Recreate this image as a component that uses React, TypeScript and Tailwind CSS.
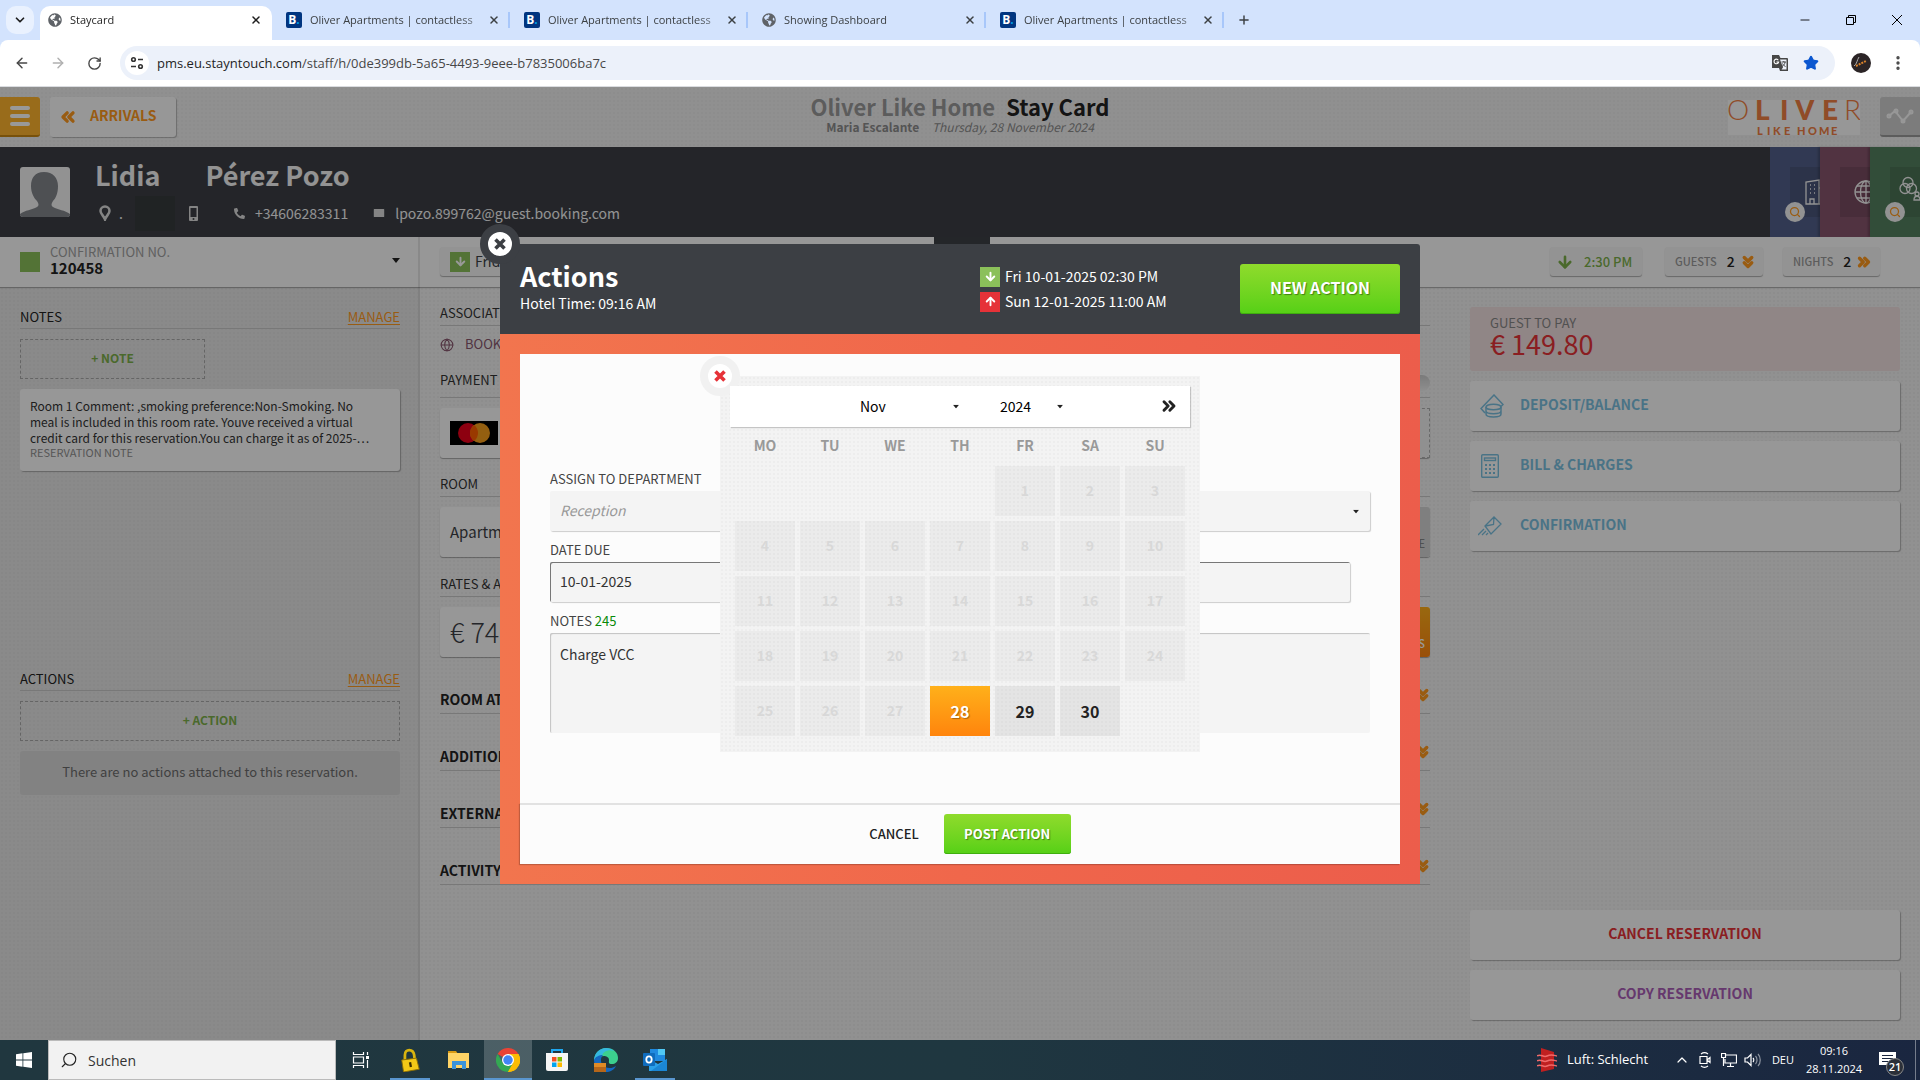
import type { ReactNode } from "react";
import {
  ArrowDown,
  ArrowLeft,
  ArrowRight,
  ArrowUp,
  ChevronDown,
  ChevronUp,
  ChevronsDown,
  ChevronsLeft,
  ChevronsRight,
  Globe,
  Mail,
  Minus,
  MoreVertical,
  Plus,
  RotateCw,
  Search,
  Star,
  X,
} from "lucide-react";
import { FaGlobeAmericas, FaPhone } from "react-icons/fa";

const texture =
  "bg-[radial-gradient(#00000006_1px,transparent_1px)] bg-size-[4px_4px]";

const tabs = [
  { title: "Staycard", icon: "globe", active: true },
  { title: "Oliver Apartments | contactless", icon: "booking" },
  { title: "Oliver Apartments | contactless", icon: "booking" },
  { title: "Showing Dashboard", icon: "globe" },
  { title: "Oliver Apartments | contactless", icon: "booking" },
];

const weekdays = ["MO", "TU", "WE", "TH", "FR", "SA", "SU"];
const today = 28;
const days: (number | null)[] = [
  null, null, null, null,
  ...Array.from({ length: 30 }, (_, i) => i + 1),
];

function Caret({ className = "" }: { className?: string }) {
  return (
    <svg viewBox="0 0 8 5" className={`w-2 h-[5px] shrink-0 ${className}`}>
      <path d="M0 0h8L4 5z" fill="#222" />
    </svg>
  );
}

function BoldCross() {
  return (
    <svg viewBox="0 0 12 12" className="size-3" fill="none" stroke="currentColor" strokeWidth="3.600">
      <path d="M1.500 1.500l9 9M10.500 1.500l-9 9" />
    </svg>
  );
}

function TabIcon({ kind }: { kind: string }) {
  if (kind === "globe") {
    return <FaGlobeAmericas className="size-[14px] shrink-0 text-[#5f6368]" />;
  }
  return (
    <span className="size-4 shrink-0 rounded-[2px] bg-[#003580] text-white text-[12px] leading-4 font-bold text-center">
      B<span className="text-[#009fe3]">.</span>
    </span>
  );
}

function BrowserTabs() {
  return (
    <div className="h-10 bg-[#d3e3fd] flex items-end text-[11px] text-[#3c4043]">
      <button aria-label="Search tabs" className="ml-[6px] mr-[6px] mb-[6px] size-7 rounded-[10px] bg-[#e9f1fe] grid place-items-center">
        <ChevronDown className="size-[14px] text-[#1f1f1f]" strokeWidth={3} />
      </button>
      {tabs.map((t, i) => (
        <div
          key={i}
          className={
            "relative h-[34px] pb-[6px] flex items-center gap-2 " +
            (t.active
              ? "w-[232px] px-2 bg-white rounded-t-[10px] text-[#1f1f1f]"
              : "w-[238px] pl-[14px] pr-2")
          }
        >
          <TabIcon kind={t.icon} />
          <span className="flex-1 whitespace-nowrap overflow-hidden [mask-image:linear-gradient(90deg,#000_88%,#0008)]">
            {t.title}
          </span>
          <button aria-label="Close tab" className="size-4 grid place-items-center">
            <X className="size-3" strokeWidth={3} />
          </button>
          {!t.active && <i className="absolute right-0 top-[6px] w-[2px] h-4 bg-[#a8c7fa]" />}
        </div>
      ))}
      <button aria-label="New tab" className="ml-2 h-7 mb-[6px] w-6 grid place-items-center">
        <Plus className="size-[14px]" strokeWidth={2.5} />
      </button>
      <div className="ml-auto flex h-10 text-black">
        <button aria-label="Minimize" className="w-[46px] grid place-items-center">
          <Minus className="size-[14px]" strokeWidth={1.5} />
        </button>
        <button aria-label="Restore" className="w-[46px] grid place-items-center">
          <svg viewBox="0 0 12 12" className="size-3" fill="none" stroke="#000">
            <path d="M1.5 3.5h7v7h-7zM3.5 3.500v-2h7v7h-2" />
          </svg>
        </button>
        <button aria-label="Close" className="w-[46px] grid place-items-center">
          <svg viewBox="0 0 12 12" className="size-3" fill="none" stroke="#000">
            <path d="M1 1l10 10M11 1L1 11" />
          </svg>
        </button>
      </div>
    </div>
  );
}

function AddressBar() {
  return (
    <div className="bg-[#d3e3fd]">
      <div className="h-[47px] bg-white rounded-t-lg border-b border-[#dadce0] flex items-center pl-1 text-[#474747]">
        <button aria-label="Back" className="w-9 grid place-items-center">
          <ArrowLeft className="size-4" strokeWidth={2.2} />
        </button>
        <button aria-label="Forward" className="w-9 grid place-items-center text-[#b0b0b0]">
          <ArrowRight className="size-4" strokeWidth={2.2} />
        </button>
        <button aria-label="Reload" className="w-9 grid place-items-center mr-2">
          <RotateCw className="size-[15px]" strokeWidth={2.2} />
        </button>
        <div className="flex-1 h-[34px] rounded-full bg-[#ecf1fa] flex items-center pl-[5px] pr-4">
          <span className="size-6 rounded-full bg-white grid place-items-center mr-2">
            <svg viewBox="0 0 14 14" className="size-[14px]" fill="none" stroke="#333" strokeWidth="1.6">
              <circle cx="3.500" cy="3.500" r="1.800" />
              <path d="M8 3.500h5M1 10.500h5" />
              <circle cx="10.500" cy="10.500" r="1.800" />
            </svg>
          </span>
          <div className="flex-1 text-[13px] leading-5 text-[#474747] whitespace-nowrap">
            <span className="text-[#1f1f1f]">pms.eu.stayntouch.com</span>
            /staff/h/0de399db-5a65-4493-9eee-b7835006ba7c
          </div>
          <svg viewBox="0 0 18 18" className="size-[18px] mr-[14px]">
            <path d="M1 1h7l1.500 3H16a1 1 0 0 1 1 1v12H9l-1-3H1z" fill="#474747" />
            <path d="M9 5.500h6.500v10H10.500l1.500-2z" fill="#ecf1fa" />
            <path d="M7.300 6.200A2.300 2.300 0 1 0 7.600 8H5.400" fill="none" stroke="#fff" strokeWidth="1.100" />
            <path d="M10.500 8h4.500M12.800 7v1M14 8c0 2-1.500 3.500-3 4.500M11.500 9.500c.7 1.500 2 2.500 3 3" fill="none" stroke="#474747" strokeWidth="1" />
          </svg>
          <Star className="size-4 text-[#0b57d0] fill-[#0b57d0]" />
        </div>
        <svg viewBox="0 0 20 20" className="size-5 ml-4 mr-[18px]">
          <circle cx="10" cy="10" r="10" fill="#2b2426" />
          <path d="M3 13c3-2 3-6 5-9" stroke="#aaa" fill="none" />
          <path d="M5 13l10-5" stroke="#d9822b" strokeWidth="2" strokeDasharray="2 1" />
        </svg>
        <MoreVertical className="size-[18px] mr-[13px]" strokeWidth={2.5} />
      </div>
    </div>
  );
}

function PageHeader() {
  return (
    <header className={`h-[60px] bg-[#f1f1f1] ${texture} grid grid-cols-[1fr_auto_1fr] items-start pt-[10px]`}>
      <div className="flex gap-[10px]">
        <button aria-label="Menu" className="w-10 h-10 bg-[#ffb52e] rounded-r-[3px] border-b-2 border-[#c98712] flex flex-col justify-center items-center gap-1">
          <i className="w-5 h-1 rounded bg-white" />
          <i className="w-5 h-1 rounded bg-white" />
          <i className="w-5 h-1 rounded bg-white" />
        </button>
        <button className="h-10 w-[126px] rounded-[3px] bg-[#fcfcfc] shadow-[1px_1px_1px_#00000040] flex items-center pl-2 pb-[3px] gap-3 text-[14px] font-bold text-[#ff991e]">
          <ChevronsLeft className="size-5 mt-[3px]" strokeWidth={4} />
          ARRIVALS
        </button>
      </div>
      <div className="text-center">
        <h1 className="text-[22px] leading-[18px] font-bold text-[#9a9a9a]">
          Oliver Like Home <span className="ml-[6px] text-[#222]">Stay Card</span>
        </h1>
        <p className="text-[12px] leading-6 text-[#8c8c8c]">
          <b className="font-bold">Maria Escalante</b> <i className="ml-[10px]">Thursday, 28 November 2024</i>
        </p>
      </div>
      <div className="flex justify-end gap-5">
        <svg viewBox="0 0 132 35" className="w-[132px] h-[35px] mt-[3px] bg-[#fcfcfc] font-[Lato,sans-serif]" fill="#f07f43">
          <text y="20" fontSize="28" fontWeight="300" x="-1">O</text>
          <text y="20" fontSize="28" fontWeight="900" x="27 52 67 94">LIVE</text>
          <text y="20" fontSize="28" fontWeight="300" x="116">R</text>
          <text y="35" fontSize="11" fontWeight="900" x="29 39 45 56 67 69 80 91 103">LIKE HOME</text>
        </svg>
        <button aria-label="Activity" className="w-10 h-10 rounded-l-[3px] bg-[#cfcfcf] border-b-2 border-[#9a9a9a] grid place-items-center">
          <svg viewBox="0 0 28 18" className="w-7 h-[18px]" fill="none" stroke="#fcfcfc" strokeWidth="2">
            <path d="M3 9l6-5 8 10 8-9" />
            <circle cx="3" cy="9" r="1.500" />
            <circle cx="10" cy="4" r="1.500" />
            <circle cx="17" cy="14" r="1.500" />
            <circle cx="25" cy="5" r="1.500" />
          </svg>
        </button>
      </div>
    </header>
  );
}

function Loupe() {
  return (
    <span className="absolute left-[15px] top-[55px] size-5 rounded-full bg-[#f4f4f4] grid place-items-center">
      <Search className="size-3 text-[#ff991e]" strokeWidth={2.5} />
    </span>
  );
}

function GuestBar() {
  return (
    <section className="h-[90px] bg-[#3c3f45] text-[#f5f5f5] flex items-center">
      <svg viewBox="0 0 50 50" className="size-[50px] ml-5 mr-[25px] rounded-[3px]">
        <rect width="50" height="50" fill="#f4f4f4" />
        <path
          d="M24 5c-9 0-13 6-13 14 0 7 3 12 6 15 2 3 2 5 0 6-5 3-12 3-17 7v3h50v-3c-5-4-12-4-17-7-2-1-2-3 0-6 3-3 5-8 5-15 0-8-5-14-14-14z"
          fill="#82858b"
        />
      </svg>
      <div className="pt-[2px]">
        <h2 className="text-[27px] leading-10 font-bold flex gap-[45px]">
          <span>Lidia</span>
          <span>Pérez Pozo</span>
        </h2>
        <div className="h-9 flex items-center text-[14px] leading-5">
          <svg viewBox="0 0 12 16" className="w-3 h-4 ml-1 mr-2" fill="none" stroke="#ddd" strokeWidth="2.500">
            <path d="M6 14.500C5 11 1.500 9 1.500 6a4.500 4.500 0 0 1 9 0c0 3-3.500 5-4.500 8.500z" />
          </svg>
          .
          <span className="w-10 h-[35px] ml-3 bg-[#363b3c]" />
          <svg viewBox="0 0 9 15" className="w-[9px] h-[15px] ml-[14px]">
            <rect width="9" height="15" rx="1" fill="#ddd" />
            <rect x="1.500" y="2" width="6" height="9" fill="#3c3f45" />
            <circle cx="4.500" cy="13" r="1" fill="#3c3f45" />
          </svg>
          <FaPhone className="size-[11px] ml-9 mr-[10px] -scale-x-100 text-[#ddd]" />
          +34606283311
          <Mail className="size-[14px] ml-6 mr-[9px] fill-[#ddd] text-[#3c3f45]" strokeWidth={2} />
          lpozo.899762@guest.booking.com
        </div>
      </div>
      <div className="ml-auto flex h-full">
        <div className="relative w-[50px] bg-[#53608a] pl-5 pt-5 overflow-hidden">
          <div className="w-[50px] h-[50px] bg-black/10 pl-[15px] pt-3">
            <svg viewBox="0 0 24 26" className="w-6 h-[26px]" fill="none" stroke="#f4f4f4" strokeWidth="1.300">
              <path d="M1 25V3l13-2v24zM14 9h8v16h-8M5 25v-5h4v5M5 6h1M9 6h1M5 10h1M9 10h1M5 14h1M9 14h1" />
            </svg>
          </div>
          <Loupe />
        </div>
        <div className="relative w-[50px] bg-[#87556d] pl-5 pt-5 overflow-hidden shadow-[-2px_0_2px_#0003]">
          <div className="w-[50px] h-[50px] bg-black/10 pl-[14px] pt-[13px]">
            <svg viewBox="0 0 24 24" className="size-6" fill="none" stroke="#f4f4f4" strokeWidth="1.300">
              <circle cx="12" cy="12" r="11" />
              <ellipse cx="12" cy="12" rx="5.500" ry="11" />
              <path d="M12 1v22M1 12h22M3 6h18M3 18h18" />
            </svg>
          </div>
        </div>
        <div className="relative w-[50px] bg-[#548060] pl-5 pt-5 overflow-hidden shadow-[-2px_0_2px_#0003]">
          <div className="w-[50px] h-[50px] bg-black/10 pl-[9px] pt-[9px]">
            <svg viewBox="0 0 28 28" className="size-7" fill="none" stroke="#f4f4f4" strokeWidth="1.300">
              <circle cx="9" cy="6.500" r="5" />
              <circle cx="6" cy="12.500" r="5" />
              <circle cx="12.500" cy="12.500" r="5" />
              <circle cx="18" cy="18" r="2" />
              <path d="M15 24c0-5 6-5 6 0z" />
            </svg>
          </div>
          <Loupe />
        </div>
      </div>
    </section>
  );
}

function Chip({ children, className = "" }: { children: ReactNode; className?: string }) {
  return (
    <button className={`h-[29px] rounded-[3px] bg-[#f6f6f6] shadow-[0_1px_1px_#00000050] flex items-center ${className}`}>
      {children}
    </button>
  );
}

function ReservationBar() {
  return (
    <section className="relative z-10 h-[50px] bg-[#fcfcfc] shadow-[0_1px_1px_#00000045] flex">
      <div className="w-[420px] shrink-0 border-r-2 border-[#e4e4e4] pl-5 pr-[18px] flex items-center gap-[10px]">
        <i className="size-5 bg-[#8bc05a]" />
        <div className="pb-1">
          <div className="text-[13px] leading-4 text-[#a0a0a0]">CONFIRMATION NO.</div>
          <div className="text-[15px] leading-4 font-bold text-[#222]">120458</div>
        </div>
        <Caret className="ml-auto mb-1" />
      </div>
      <div className="flex-1 flex items-start pt-[10px] pl-5 pr-10">
        <Chip className="px-[10px] gap-[5px] text-[14px] text-[#3c3f45]">
          <i className="size-5 bg-[#8bc05a] grid place-items-center text-white">
            <ArrowDown className="size-[13px]" strokeWidth={3.5} />
          </i>
          Friday
        </Chip>
        <Chip className="ml-auto w-[92px] pl-[6px] gap-[10px] text-[13px] font-medium text-[#7cb04a]">
          <ArrowDown className="size-[18px]" strokeWidth={3.5} />
          2:30 PM
        </Chip>
        <Chip className="ml-[23px] w-[98px] pl-[10px] text-[11px] font-medium text-[#999]">
          GUESTS
          <span className="ml-[10px] mr-1 text-[14px] text-[#222]">2</span>
          <ChevronsDown className="size-[18px] text-[#ff991e]" strokeWidth={4.5} />
        </Chip>
        <Chip className="ml-5 w-[97px] pl-[10px] text-[11px] font-medium text-[#999]">
          NIGHTS
          <span className="ml-[10px] mr-1 text-[14px] text-[#222]">2</span>
          <ChevronsRight className="size-[18px] text-[#ff991e]" strokeWidth={4.5} />
        </Chip>
      </div>
    </section>
  );
}

function ManageHeading({ children }: { children: ReactNode }) {
  return (
    <div className="h-[22px] flex justify-between border-b border-[#c8c8c8] text-[13px] leading-5 text-[#222]">
      {children}
      <a href="#manage" className="text-[#ff991e] underline underline-offset-2">MANAGE</a>
    </div>
  );
}

const dashedButton =
  "block mt-[10px] h-10 pb-[2px] border border-dashed border-[#a8a8a8] text-[12px] font-bold text-[#7cb04a]";

function LeftColumn() {
  return (
    <aside className={`w-[420px] shrink-0 bg-[#e6e6e6] ${texture} border-r-2 border-[#d6d6d6] pl-5 pr-[18px] grid grid-rows-2`}>
      <section className="pt-5">
        <ManageHeading>NOTES</ManageHeading>
        <button className={`${dashedButton} w-[185px]`}>+ NOTE</button>
        <article className="mt-[10px] h-[82px] rounded-[3px] bg-[#fcfcfc] shadow-[1px_1px_1px_#00000045] pl-[10px] pt-[9px] text-[12px] leading-4 text-[#333]">
          <p className="whitespace-pre">
            {"Room 1 Comment: ,smoking preference:Non-Smoking. No\nmeal is included in this room rate. Youve received a virtual\ncredit card for this reservation.You can charge it as of 2025-…"}
          </p>
          <div className="text-[11px] leading-3 text-[#909090]">RESERVATION NOTE</div>
        </article>
      </section>
      <section className="pt-[5px]">
        <ManageHeading>ACTIONS</ManageHeading>
        <button className={`${dashedButton} w-full`}>+ ACTION</button>
        <p className="mt-[10px] h-11 rounded-[3px] bg-[#d9d9d9] text-[13px] leading-[42px] text-center text-[#6c6c6c]">
          There are no actions attached to this reservation.
        </p>
      </section>
    </aside>
  );
}

function StayHeading({ children }: { children: ReactNode }) {
  return (
    <h3 className="h-[23px] border-b border-[#c8c8c8] text-[13px] leading-5 text-[#333]">{children}</h3>
  );
}

function StayCard({ children, side }: { children: ReactNode; side: ReactNode }) {
  return (
    <div className="my-[10px] h-[50px] flex rounded-[3px] bg-[#fcfcfc] shadow-[0_1px_1px_#00000050]">
      <div className="flex-1 flex items-center px-[10px]">{children}</div>
      {side}
    </div>
  );
}

function MiddleColumn() {
  return (
    <main className="flex-1 px-5 pt-4">
      <StayHeading>ASSOCIATED PROFILES</StayHeading>
      <div className="h-[45px] pt-2 flex items-start gap-[11px] text-[13px] leading-5 text-[#87556d]">
        <Globe className="size-[14px] mt-1" strokeWidth={1.8} />
        BOOKING.COM
      </div>
      <div className="flex justify-between border-b border-[#c8c8c8] h-[27px] text-[13px] leading-[18px] text-[#333]">
        PAYMENT METHOD
        <i className="w-10 h-4 mt-1 rounded-full bg-linear-to-b from-[#ccc] to-[#eee]" />
      </div>
      <StayCard side={<button aria-label="Add payment" className="w-[120px] border border-dashed border-[#b0b0b0] bg-[#f1f1f1]" />}>
        <svg viewBox="0 0 48 24" className="w-12 h-6">
          <rect width="48" height="24" />
          <circle cx="18" cy="12" r="10" fill="#eb001b" />
          <circle cx="30" cy="12" r="10" fill="#f79e1b" />
          <path d="M24 4a10 10 0 0 1 0 16 10 10 0 0 1 0-16z" fill="#ff5f00" />
        </svg>
      </StayCard>
      <div className="mt-4">
        <StayHeading>ROOM</StayHeading>
        <StayCard
          side={
            <button className="w-20 rounded-r-[3px] bg-[#d4d4d4] text-[11px] font-medium text-[#888] pt-[22px] pr-[5px] text-right">
              CHANGE
            </button>
          }
        >
          <span className="text-[15px] text-[#3c3f45]">Apartment</span>
        </StayCard>
      </div>
      <div className="mt-[17px]">
        <StayHeading>RATES &amp; ADDONS</StayHeading>
        <StayCard
          side={
            <button className="w-20 rounded-[3px] bg-linear-to-b from-[#ffae1a] to-[#ff8410] text-[11px] font-medium text-white pt-[22px] pr-[5px] text-right">
              ADDONS
            </button>
          }
        >
          <span className="text-[27px] font-light text-[#3c3f45]">€ 74.90</span>
        </StayCard>
      </div>
      <div className="mt-[17px]">
        {["ROOM ATTRIBUTES", "ADDITIONAL DETAILS", "EXTERNAL REFERENCES", "ACTIVITY LOG"].map((s) => (
          <button
            key={s}
            className="w-full h-[57px] first:h-[40px] flex items-end justify-between pb-[3px] border-b border-[#c8c8c8] text-[14px] leading-[22px] font-bold text-[#222]"
          >
            {s}
            <ChevronsDown className="size-[18px] mb-[6px] -mr-[2px] text-[#ff991e]" strokeWidth={4.5} />
          </button>
        ))}
      </div>
    </main>
  );
}

const cardButton =
  "h-[50px] rounded-[3px] bg-[#fcfcfc] shadow-[1px_1px_1px_#00000045] flex items-center pb-[3px] text-[14px] font-bold";

function RightColumn() {
  return (
    <aside className="w-[470px] shrink-0 px-5 py-5 flex flex-col gap-[10px]">
      <div className="h-16 rounded-[3px] bg-[#f0dfdf] px-5 pt-2">
        <div className="text-[13px] leading-4 text-[#888]">GUEST TO PAY</div>
        <div className="text-[27px] leading-[26px] text-[#e63238]">€ 149.80</div>
      </div>
      <button className={`${cardButton} pl-[10px] gap-4 text-[#7bc0e0]`}>
        <svg viewBox="0 0 24 24" className="size-6 mt-[3px]" fill="none" stroke="currentColor" strokeWidth="1.500">
          <path d="M5 19L1 14.500 14 1l9 9.500-2 2" />
          <ellipse cx="13.500" cy="13" rx="7.500" ry="2.800" />
          <path d="M6 13v7c0 4 15 4 15 0v-7M6 17c0 3.500 15 3.500 15 0" />
        </svg>
        DEPOSIT/BALANCE
      </button>
      <button className={`${cardButton} pl-[11px] gap-[21px] text-[#7bc0e0]`}>
        <svg viewBox="0 0 18 24" className="w-[18px] h-6 mt-[3px]" fill="none" stroke="currentColor" strokeWidth="1.400">
          <rect x=".7" y=".7" width="16.600" height="22.600" rx="1" />
          <rect x="3.500" y="4" width="11" height="2.500" />
          <path d="M4 11h10M4 15h10M4 19h10" strokeDasharray="2 2" strokeWidth="2" />
        </svg>
        BILL &amp; CHARGES
      </button>
      <button className={`${cardButton} pl-2 gap-[18px] text-[#7bc0e0]`}>
        <svg viewBox="0 0 24 20" className="w-6 h-5 mt-[3px]" fill="none" stroke="currentColor" strokeWidth="1.300">
          <path d="M7 10L16 1l7 7-10 10zM7.500 10l8-1.500L16 1M0 19l6-6M4 19l4-4M8 19l2-2" />
        </svg>
        CONFIRMATION
      </button>
      <button className={`${cardButton} mt-auto justify-center text-[#e63238]`}>CANCEL RESERVATION</button>
      <button className={`${cardButton} justify-center text-[#aa5eb7]`}>COPY RESERVATION</button>
    </aside>
  );
}

function DatePicker() {
  return (
    <div className={`absolute left-[200px] top-[22px] w-[480px] h-[376px] bg-[#f3f3f3] ${texture} px-[10px] pt-[10px]`}>
      <button
        aria-label="Close calendar"
        className="absolute -left-5 -top-5 size-10 rounded-full bg-white border-8 border-[#f1f1f1] grid place-items-center text-[#e63238]"
      >
        <BoldCross />
      </button>
      <div className="relative h-[41px] bg-white shadow-[1px_1px_1px_#00000030] flex items-center justify-center gap-5 text-[14px] text-black">
        <div className="relative w-[120px]">
          <select aria-label="Month" defaultValue="Nov" className="w-full appearance-none pl-[10px]">
            <option>Nov</option>
            <option>Dec</option>
          </select>
          <Caret className="absolute right-[10px] top-2 scale-75" />
        </div>
        <div className="relative w-20">
          <select aria-label="Year" defaultValue="2024" className="w-full appearance-none pl-[10px]">
            <option>2024</option>
            <option>2025</option>
          </select>
          <Caret className="absolute right-[6px] top-2 scale-75" />
        </div>
        <button aria-label="Next month" className="absolute right-[11px]">
          <ChevronsRight className="size-5 text-[#222]" strokeWidth={3.5} />
        </button>
      </div>
      <table className="border-separate border-spacing-x-[5px] border-spacing-y-0 table-fixed w-[460px]">
        <thead>
          <tr className="h-[39px] text-[14px] text-[#999]">
            {weekdays.map((d) => (
              <th key={d} className="font-bold p-0 pb-[2px]">{d}</th>
            ))}
          </tr>
        </thead>
        <tbody>
          {[0, 1, 2, 3, 4].map((w) => (
            <tr key={w}>
              {days.slice(w * 7, w * 7 + 7).map((d, i) => (
                <td key={i} className="p-0 pb-[5px]">
                  {d !== null && (
                    <button
                      disabled={d < today}
                      className={
                        "block w-full h-[50px] font-bold " +
                        (d < today
                          ? "bg-black/[0.03] text-[14px] text-[#d8d8d8]"
                          : d === today
                          ? "bg-linear-to-b from-[#ffb01a] to-[#ff840c] text-[16px] text-white [text-shadow:1px_1px_1px_#0005]"
                          : "bg-black/[0.06] text-[16px] text-[#222]")
                      }
                    >
                      {d}
                    </button>
                  )}
                </td>
              ))}
            </tr>
          ))}
        </tbody>
      </table>
    </div>
  );
}

const greenButton =
  "rounded-[3px] bg-linear-to-b from-[#8fdb2c] to-[#55d016] shadow-[inset_0_-1px_0_#3fae0e] text-white font-bold [text-shadow:1px_1px_1px_#0006]";
const field = "bg-[#f4f4f4] rounded-[2px] px-[10px] text-[14px] text-[#333] outline-none";
const fieldLabel = "block text-[13px] leading-5 text-[#444]";

function ActionsDialog() {
  return (
    <div role="dialog" aria-label="Actions" className="relative w-[920px] h-[640px] flex flex-col">
      <button
        aria-label="Close dialog"
        className="absolute -left-5 -top-5 size-10 rounded-full bg-white border-8 border-[#3c3f44] grid place-items-center text-[#3c3f44]"
      >
        <BoldCross />
      </button>
      <header className="h-[90px] bg-[#3c3f44] rounded-tr-[3px] px-5 flex text-white">
        <div className="pt-[14px]">
          <h2 className="text-[27px] leading-9 font-bold">Actions</h2>
          <p className="text-[14px] leading-[18px]">Hotel Time: 09:16 AM</p>
        </div>
        <div className="ml-auto mr-[70px] w-[190px] pt-[23px] flex flex-col gap-[5px] text-[14px] leading-[18px] whitespace-nowrap">
          <div className="flex gap-[5px]">
            <i className="size-5 bg-[#8bc05a] grid place-items-center">
              <ArrowDown className="size-[13px]" strokeWidth={3.5} />
            </i>
            Fri 10-01-2025 02:30 PM
          </div>
          <div className="flex gap-[5px]">
            <i className="size-5 bg-[#e63238] grid place-items-center">
              <ArrowUp className="size-[13px]" strokeWidth={3.5} />
            </i>
            Sun 12-01-2025 11:00 AM
          </div>
        </div>
        <button className={`${greenButton} mt-5 w-40 h-[50px] pb-[3px] text-[16px]`}>NEW ACTION</button>
      </header>
      <div className="flex-1 p-5 bg-linear-to-r from-[#f2754e] via-[#f0674b] to-[#ec5d4b] flex">
        <div className="relative flex-1 bg-[#fcfcfc] flex flex-col">
          <form className="flex-1 px-[30px] pt-[115px]">
            <label htmlFor="department" className={fieldLabel}>ASSIGN TO DEPARTMENT</label>
            <div className="relative mt-[2px] mb-[9px]">
              <select id="department" className={`${field} appearance-none w-full h-10 italic text-[#999] shadow-[1px_1px_1px_#00000030]`}>
                <option>Reception</option>
              </select>
              <Caret className="absolute right-[10px] top-[18px] scale-75" />
            </div>
            <label htmlFor="due" className={fieldLabel}>DATE DUE</label>
            <input
              id="due"
              defaultValue="10-01-2025"
              className={`${field} mt-[2px] mb-[9px] block w-[800px] h-10 pb-[2px] shadow-[inset_1px_1px_0_#777,1px_1px_1px_#00000030]`}
            />
            <label htmlFor="notes" className={fieldLabel}>
              NOTES <span className="text-[#088a08]">245</span>
            </label>
            <textarea
              id="notes"
              defaultValue="Charge VCC"
              className={`${field} mt-[2px] block w-full h-[100px] resize-none pt-[11px] leading-5 shadow-[inset_1px_1px_1px_#00000035]`}
            />
          </form>
          <footer className="h-[61px] border-t-2 border-[#e2e2e2] shadow-[-1px_1px_1px_#0003] flex items-center justify-center">
            <button className="px-5 text-[13px] font-medium text-[#222]">CANCEL</button>
            <button className={`${greenButton} ml-[5px] w-[127px] h-10 text-[13px]`}>POST ACTION</button>
          </footer>
          <DatePicker />
        </div>
      </div>
    </div>
  );
}

function TaskItem({ label, state, children }: { label: string; state?: "open" | "active"; children: ReactNode }) {
  return (
    <button
      aria-label={label}
      className={"relative w-12 h-10 grid place-items-center " + (state === "active" ? "bg-white/20" : "")}
    >
      {children}
      {state && (
        <i className={"absolute bottom-0 h-[2px] bg-[#5a96cf] " + (state === "active" ? "inset-x-0" : "inset-x-1")} />
      )}
    </button>
  );
}

function Taskbar() {
  return (
    <footer className="h-10 shrink-0 bg-linear-to-r from-[#20373f] via-[#1f3740] to-[#1a2640] flex items-center text-white">
      <button aria-label="Start" className="w-12 grid place-items-center">
        <svg viewBox="0 0 16 16" className="size-4" fill="#fff">
          <path d="M0 2.200l6.500-.9v6.300H0zM7.300 1.200L16 0v7.600H7.300zM0 8.400h6.500v6.300L0 13.800zM7.300 8.400H16V16l-8.700-1.200z" />
        </svg>
      </button>
      <label className="w-72 h-10 bg-[#f2f2f2] border border-[#bbb] flex items-center pl-[11px] gap-[10px] text-[#222]">
        <Search className="size-[18px] -scale-x-100" strokeWidth={1.5} />
        <input aria-label="Suchen" placeholder="Suchen" className="w-52 bg-transparent text-[14px] placeholder:text-[#333]" />
      </label>
      <div className="flex gap-px ml-px">
        <TaskItem label="Task view">
          <svg viewBox="0 0 18 16" className="w-[18px] h-4" fill="none" stroke="#fff" strokeWidth="1.200">
            <path d="M1.500 0v2.500h10V0M1.500 5h10v6h-10zM1.500 16v-2.500h10V16M15.500 0v3M15.500 8v8" />
            <path d="M15.500 4v3" strokeWidth="3" />
          </svg>
        </TaskItem>
        <TaskItem label="Lock" state="open">
          <svg viewBox="0 0 22 26" className="w-[22px] h-6">
            <path d="M5.500 13V7.500c0-7 9-7 10 0L16 12" fill="none" stroke="#d9b40f" strokeWidth="3" />
            <path d="M2 13l16-2 3 12-17 3z" fill="#f3c816" stroke="#8a6d05" />
            <path d="M11 15.500l1 5" stroke="#3a2d00" strokeWidth="2.500" />
          </svg>
        </TaskItem>
        <TaskItem label="Explorer">
          <svg viewBox="0 0 22 20" className="w-[22px] h-5">
            <path d="M0 1h8l2 3H0z" fill="#d99a14" />
            <path d="M0 3h21v15H0z" fill="#ffd466" />
            <path d="M4 11h14v8h-4v-4H8v4H4z" fill="#3a93d9" />
          </svg>
        </TaskItem>
        <TaskItem label="Chrome" state="active">
          <svg viewBox="0 0 48 48" className="size-6">
            <path d="M24 24L3.200 12A24 24 0 0 1 44.800 12z" fill="#ea4335" />
            <path d="M24 24l20.800-12A24 24 0 0 1 24 48z" fill="#fbbc04" />
            <path d="M24 24L34.400 30 24 48A24 24 0 0 1 3.200 12L13.600 30z" fill="#34a853" />
            <path d="M24 12h20.800A24 24 0 0 1 24 48l10.400-18z" fill="#fbbc04" />
            <circle cx="24" cy="24" r="12" fill="#fff" />
            <circle cx="24" cy="24" r="9.500" fill="#4285f4" />
          </svg>
        </TaskItem>
        <TaskItem label="Store">
          <svg viewBox="0 0 24 24" className="size-6">
            <path d="M7 6V2h10v4" fill="none" stroke="#1fa8f0" strokeWidth="2" />
            <path d="M1 5h22v16a2 2 0 0 1-2 2H3a2 2 0 0 1-2-2z" fill="#f5f5f5" />
            <path d="M7 9h4.500v4.500H7z" fill="#f25022" />
            <path d="M12.500 9H17v4.500h-4.500z" fill="#7fba00" />
            <path d="M7 14.500h4.500V19H7z" fill="#00a4ef" />
            <path d="M12.500 14.500H17V19h-4.500z" fill="#ffb900" />
          </svg>
        </TaskItem>
        <TaskItem label="Edge">
          <svg viewBox="0 0 26 26" className="size-[26px]">
            <path d="M1 14C1 6 7 1 13 1c8 0 12 5 12 10 0 4-3 6-6 6-4 0-3-2-3-4 0-3-3-4-5-4-5 0-9 3-10 5z" fill="#3ccf8e" />
            <path d="M1 14C1 6 7 1 13 1c3 0 6 1 8 3-5-2-11 0-12 5C5 9 2 12 1 14z" fill="#35b8e0" />
            <path d="M1 13c1-3 5-5 9-5-3 3-3 9 2 12 4 2 8 1 11-1-2 4-6 6-10 6C6 25 1 20 1 13z" fill="#1468c0" />
            <path d="M1 16h12v9H1z" fill="#b5661a" />
            <path d="M1 16h12v4H1z" fill="#e08a25" />
          </svg>
        </TaskItem>
        <TaskItem label="Outlook" state="open">
          <svg viewBox="0 0 26 24" className="w-[26px] h-6">
            <path d="M8 1h15v12H8z" fill="#1f8ae0" />
            <path d="M16 1h7v6h-7z" fill="#50c8f5" />
            <path d="M7 11l9 5 9-5v12H7z" fill="#2aa0e8" />
            <path d="M25 11v12H9z" fill="#1b86d4" />
            <rect x="1" y="5" width="12" height="13" rx="1" fill="#0f6cbd" />
            <ellipse cx="7" cy="11.500" rx="2.700" ry="3.200" fill="none" stroke="#fff" strokeWidth="1.800" />
          </svg>
        </TaskItem>
      </div>
      <div className="ml-auto flex items-center text-[11px]">
        <svg viewBox="0 0 20 24" className="w-5 h-6 mr-[10px]">
          <path d="M4 0l13 4v17L4 24z" fill="#c02020" />
          <path d="M0 8c4-3 6 2 10 0s6-1 10 0M0 13c4-3 6 2 10 0s6-1 10 0M0 18c4-3 6 2 10 0s6-1 10 0" fill="none" stroke="#f06a6a" strokeWidth="1.500" />
        </svg>
        <span className="w-[83px] text-[13px] whitespace-nowrap mr-6">Luft: Schlecht</span>
        <ChevronUp className="size-4 mr-[9px]" strokeWidth={1.8} />
        <svg viewBox="0 0 12 16" className="w-3 h-4 mr-[10px]" fill="none" stroke="#fff" strokeWidth="1.200">
          <path d="M1 4.500h7v7H1zM8 8l3-2.500v5zM2 2c2-1.500 5-1.500 7 0M2 14c2 1.500 5 1.500 7 0" />
        </svg>
        <svg viewBox="0 0 16 14" className="w-4 h-[14px] mr-[7px]" fill="none" stroke="#fff" strokeWidth="1.200">
          <path d="M5 2h10.500v8H4V6M.5.5h4v4h-4zM2.500 5v8M6 13.500h7M9.500 10v3" />
        </svg>
        <svg viewBox="0 0 18 14" className="w-[18px] h-[14px] mr-[10px]" fill="none" stroke="#fff" strokeWidth="1.200">
          <path d="M1 5h2.500L7 1.500v11L3.500 9H1zM9 5c1 1 1 3 0 4" />
          <path d="M11.500 3c2 2 2 6 0 8M14 1c3 3 3 9 0 12" opacity=".5" />
        </svg>
        DEU
        <div className="w-14 ml-3 mr-[6px] text-center leading-[18px]">
          09:16
          <br />
          28.11.2024
        </div>
        <div className="relative w-10 h-10">
          <svg viewBox="0 0 18 16" className="absolute left-[11px] top-3 w-[18px] h-4">
            <path d="M0 0h17v13h-6l-3 3v-3H0z" fill="#fff" />
            <path d="M3 3.500h11M3 6.500h11M3 9.500h7" stroke="#1a2640" strokeWidth="1.200" />
          </svg>
          <span className="absolute left-[18px] top-[18px] size-[18px] rounded-full bg-[#2b2f38] border border-[#888] text-[11px] leading-4 font-semibold text-center">
            21
          </span>
        </div>
        <i className="w-px h-10 bg-white/40 ml-[7px] mr-1" />
      </div>
    </footer>
  );
}

export default function App() {
  return (
    <div className="h-screen flex flex-col overflow-hidden font-[Open_Sans,sans-serif]">
      <BrowserTabs />
      <AddressBar />
      <div className="relative flex-1 min-h-0 flex flex-col font-[Noto_Sans_CJK_SC,Noto_Sans,sans-serif]">
        <PageHeader />
        <GuestBar />
        <ReservationBar />
        <div className={`flex-1 min-h-0 flex bg-[#f2f2f2] ${texture}`}>
          <LeftColumn />
          <MiddleColumn />
          <RightColumn />
        </div>
        <div className="absolute inset-0 z-20 bg-black/40 grid place-items-center">
          <i className="absolute top-[150px] left-1/2 w-14 h-2 -ml-[26px] bg-[#242629]" />
          <ActionsDialog />
        </div>
      </div>
      <Taskbar />
    </div>
  );
}
